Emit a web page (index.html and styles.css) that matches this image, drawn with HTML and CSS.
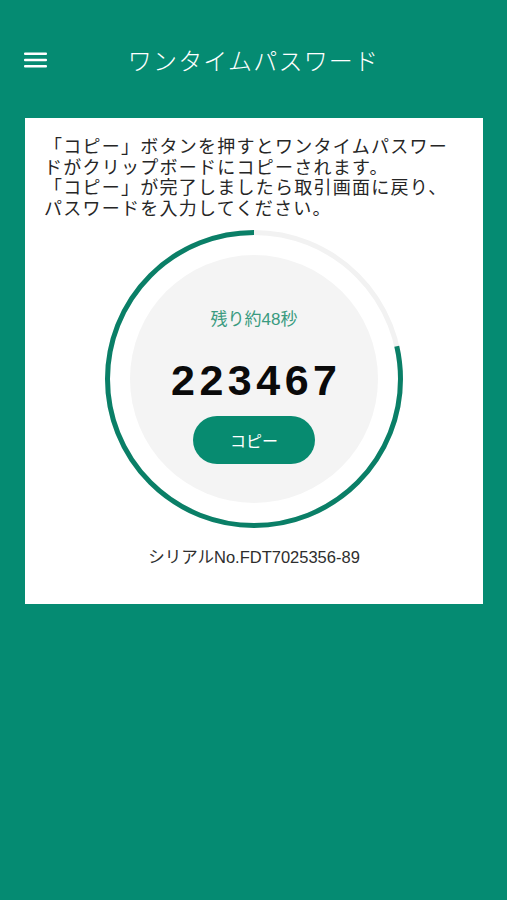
FILE: index.html
```html
<!DOCTYPE html>
<html lang="ja">
<head>
<meta charset="utf-8">
<title>ワンタイムパスワード</title>
<link rel="stylesheet" href="styles.css">
</head>
<body>
<header class="app-bar">
  <div class="menu">
    <svg width="23" height="16" viewBox="0 0 23 16" aria-hidden="true">
      <rect x="0" y="0.5" width="23" height="2.6" rx="1" fill="#fff"/>
      <rect x="0" y="6.7" width="23" height="2.6" rx="1" fill="#fff"/>
      <rect x="0" y="12.9" width="23" height="2.6" rx="1" fill="#fff"/>
    </svg>
  </div>
  <h1 class="title">ワンタイムパスワード</h1>
  <div class="spacer"></div>
</header>
<main class="main">
  <section class="card">
    <p class="desc">「コピー」ボタンを押すとワンタイムパスワー<br>ドがクリップボードにコピーされます。<br>「コピー」が完了しましたら取引画面に戻り、<br>パスワードを入力してください。</p>
    <div class="timer">
      <svg class="ring" width="300" height="300" viewBox="0 0 300 300" aria-hidden="true">
        <circle cx="150" cy="150" r="124" fill="#f4f4f4"/>
        <circle cx="150" cy="150" r="146.5" fill="none" stroke="#f2f2f2" stroke-width="5"/>
        <circle cx="150" cy="150" r="146.5" fill="none" stroke="#0a7f67" stroke-width="5"
          stroke-dasharray="723.6 920.5" stroke-dashoffset="-196.9" transform="rotate(-90 150 150)"/>
      </svg>
      <div class="timer-content">
        <div class="remain">残り約48秒</div>
        <div class="code">223467</div>
        <button class="copy" type="button">コピー</button>
      </div>
    </div>
    <p class="serial">シリアルNo.FDT7025356-89</p>
  </section>
</main>
</body>
</html>
```
FILE: styles.css
```css
html, body {
  margin: 0;
  padding: 0;
}
body {
  background: #058b72;
  min-height: 900px;
  font-family: "Liberation Sans", "Noto Sans CJK JP", sans-serif;
}
.app-bar {
  display: grid;
  grid-template-columns: 1fr auto 1fr;
  align-items: center;
  height: 80px;
  padding-top: 20px;
}
.menu {
  padding-left: 24px;
  display: flex;
  align-items: center;
}
.menu svg {
  display: block;
}
.title {
  margin: 0;
  color: #fff;
  font-family: "Noto Sans CJK JP", sans-serif;
  font-weight: 300;
  font-size: 24px;
  letter-spacing: 1.2px;
  line-height: 30px;
}
.main {
  padding: 18px 24px 0 25px;
}
.card {
  background: #fff;
  width: 458px;
  box-sizing: border-box;
  padding: 17px 19px 37px 19px;
  display: flex;
  flex-direction: column;
  align-items: center;
}
.desc {
  margin: 0;
  align-self: stretch;
  white-space: nowrap;
  color: #262626;
  font-family: "Noto Sans CJK JP", sans-serif;
  font-size: 18px;
  letter-spacing: 1.25px;
  line-height: 20.5px;
}
.timer {
  margin-top: 12px;
  display: grid;
  width: 300px;
  height: 300px;
}
.ring {
  grid-area: 1 / 1;
  display: block;
}
.timer-content {
  grid-area: 1 / 1;
  display: flex;
  flex-direction: column;
  align-items: center;
  padding-top: 81px;
}
.remain {
  color: #3a9b80;
  font-size: 17px;
  line-height: 20px;
}
.code {
  margin-top: 26px;
  font-size: 43px;
  font-weight: 700;
  line-height: 48px;
  letter-spacing: 4.5px;
  margin-right: -4.5px;
  color: #0a0a0a;
}
.copy {
  margin-top: 12px;
  width: 122px;
  height: 48px;
  border: none;
  border-radius: 24px;
  background: #078b70;
  color: #fff;
  font-family: "Noto Sans CJK JP", sans-serif;
  font-size: 16px;
  padding: 0;
}
.serial {
  margin: 18px 0 0;
  color: #2e2e2e;
  font-size: 16.5px;
  line-height: 20px;
}
```
